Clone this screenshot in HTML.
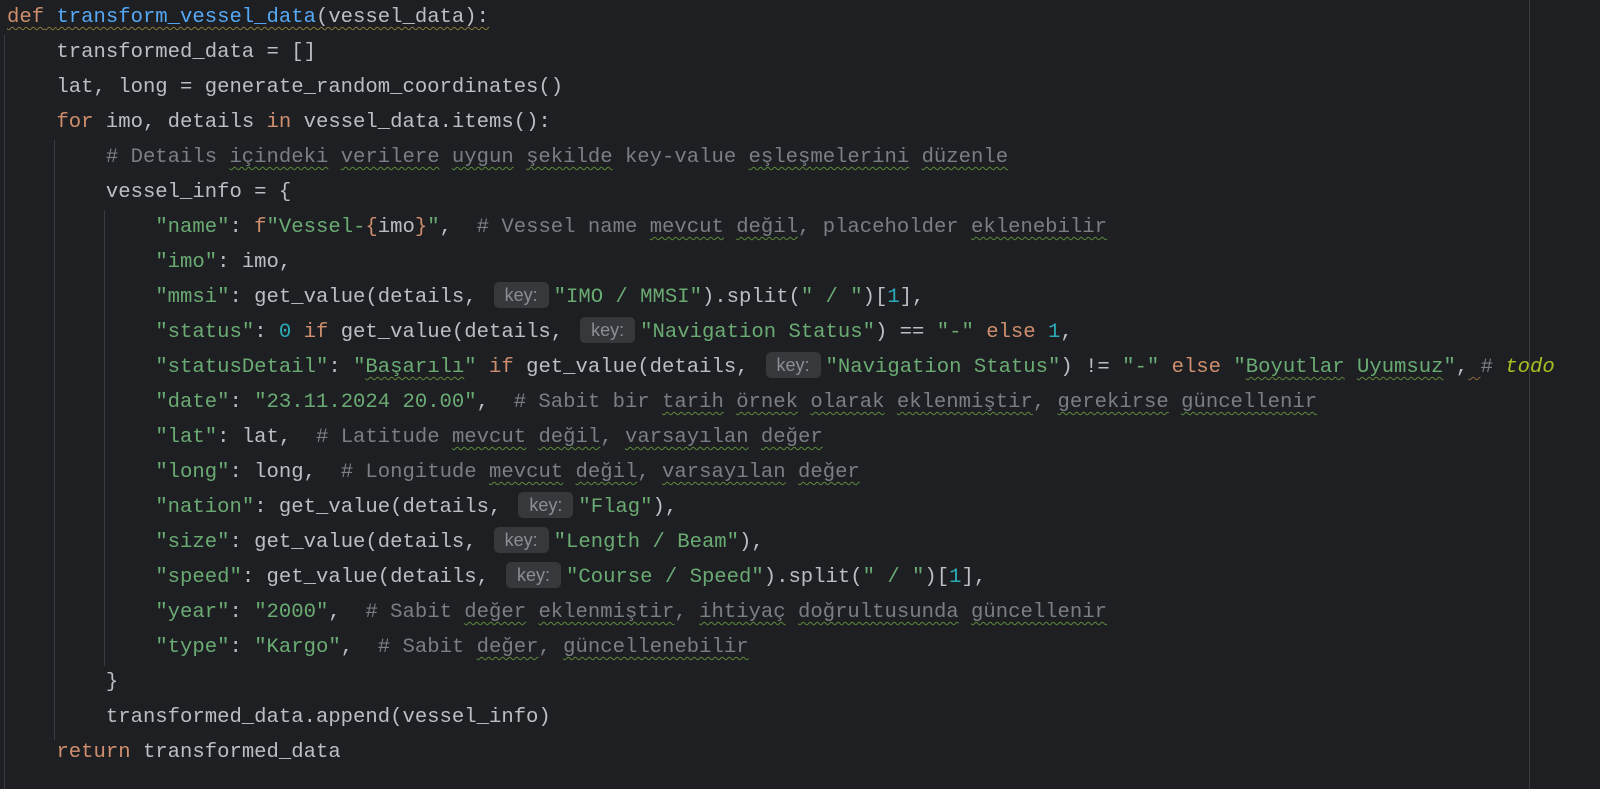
<!DOCTYPE html>
<html><head><meta charset="utf-8"><style>
body{margin:0;width:1600px;height:789px;background:#1e1f22;overflow:hidden;position:relative}
.code{position:absolute;left:7px;top:0;font-family:"Liberation Mono",monospace;font-size:20.6px;color:#bcbec4}
.l{height:35px;line-height:35px;white-space:pre}
.k{color:#cf8e6d}.f{color:#56a8f5}.s{color:#6aab73}.c{color:#7a7e85}.n{color:#2aacb8}
.t{color:#a8c023;font-style:italic}
.w{text-decoration:underline wavy #5c8a3c;text-decoration-thickness:1px;text-underline-offset:4px}
.wy{text-decoration:underline wavy #8a7a3c;text-decoration-thickness:1px;text-underline-offset:4px}
.wo{text-decoration:underline wavy #8a6a3c;text-decoration-thickness:1px;text-underline-offset:4px}
.h{display:inline-block;width:55px;height:26px;line-height:26px;margin:0 5px 0 17px;background:#36383c;border-radius:5px;color:#8b8e94;font-family:"Liberation Sans",sans-serif;font-size:18px;text-align:center;vertical-align:1px}
.g{position:absolute;width:1px;background:#393b40}
</style></head><body>
<div class="g" style="left:4px;top:35px;height:754px"></div>
<div class="g" style="left:54px;top:140px;height:600px"></div>
<div class="g" style="left:104px;top:210px;height:456px"></div>
<div class="g" style="left:1529px;top:0;height:789px;background:#3a3c40"></div>
<div class="code"><div class="l"><span class="wy"><span class="k">def</span> <span class="f">transform_vessel_data</span>(vessel_data):</span></div><div class="l">    transformed_data = []</div><div class="l">    lat, long = generate_random_coordinates()</div><div class="l">    <span class="k">for</span> imo, details <span class="k">in</span> vessel_data.items():</div><div class="l c">        # Details <span class="w">içindeki</span> <span class="w">verilere</span> <span class="w">uygun</span> <span class="w">şekilde</span> key-value <span class="w">eşleşmelerini</span> <span class="w">düzenle</span></div><div class="l">        vessel_info = {</div><div class="l">            <span class="s">"name"</span>: <span class="k">f</span><span class="s">"Vessel-</span><span class="k">{</span>imo<span class="k">}</span><span class="s">"</span>,  <span class="c"># Vessel name <span class="w">mevcut</span> <span class="w">değil</span>, placeholder <span class="w">eklenebilir</span></span></div><div class="l">            <span class="s">"imo"</span>: imo,</div><div class="l">            <span class="s">"mmsi"</span>: get_value(details,<span class="h">key:</span><span class="s">"IMO / MMSI"</span>).split(<span class="s">" / "</span>)[<span class="n">1</span>],</div><div class="l">            <span class="s">"status"</span>: <span class="n">0</span> <span class="k">if</span> get_value(details,<span class="h">key:</span><span class="s">"Navigation Status"</span>) == <span class="s">"-"</span> <span class="k">else</span> <span class="n">1</span>,</div><div class="l">            <span class="s">"statusDetail"</span>: <span class="s">"<span class="w">Başarılı</span>"</span> <span class="k">if</span> get_value(details,<span class="h">key:</span><span class="s">"Navigation Status"</span>) != <span class="s">"-"</span> <span class="k">else</span> <span class="s">"<span class="w">Boyutlar</span> <span class="w">Uyumsuz</span>"</span>,<span class="wo"> </span><span class="c">#</span> <span class="t">todo</span></div><div class="l">            <span class="s">"date"</span>: <span class="s">"23.11.2024 20.00"</span>,  <span class="c"># Sabit bir <span class="w">tarih</span> <span class="w">örnek</span> <span class="w">olarak</span> <span class="w">eklenmiştir</span>, <span class="w">gerekirse</span> <span class="w">güncellenir</span></span></div><div class="l">            <span class="s">"lat"</span>: lat,  <span class="c"># Latitude <span class="w">mevcut</span> <span class="w">değil</span>, <span class="w">varsayılan</span> <span class="w">değer</span></span></div><div class="l">            <span class="s">"long"</span>: long,  <span class="c"># Longitude <span class="w">mevcut</span> <span class="w">değil</span>, <span class="w">varsayılan</span> <span class="w">değer</span></span></div><div class="l">            <span class="s">"nation"</span>: get_value(details,<span class="h">key:</span><span class="s">"Flag"</span>),</div><div class="l">            <span class="s">"size"</span>: get_value(details,<span class="h">key:</span><span class="s">"Length / Beam"</span>),</div><div class="l">            <span class="s">"speed"</span>: get_value(details,<span class="h">key:</span><span class="s">"Course / Speed"</span>).split(<span class="s">" / "</span>)[<span class="n">1</span>],</div><div class="l">            <span class="s">"year"</span>: <span class="s">"2000"</span>,  <span class="c"># Sabit <span class="w">değer</span> <span class="w">eklenmiştir</span>, <span class="w">ihtiyaç</span> <span class="w">doğrultusunda</span> <span class="w">güncellenir</span></span></div><div class="l">            <span class="s">"type"</span>: <span class="s">"Kargo"</span>,  <span class="c"># Sabit <span class="w">değer</span>, <span class="w">güncellenebilir</span></span></div><div class="l">        }</div><div class="l">        transformed_data.append(vessel_info)</div><div class="l">    <span class="k">return</span> transformed_data</div></div>
</body></html>
